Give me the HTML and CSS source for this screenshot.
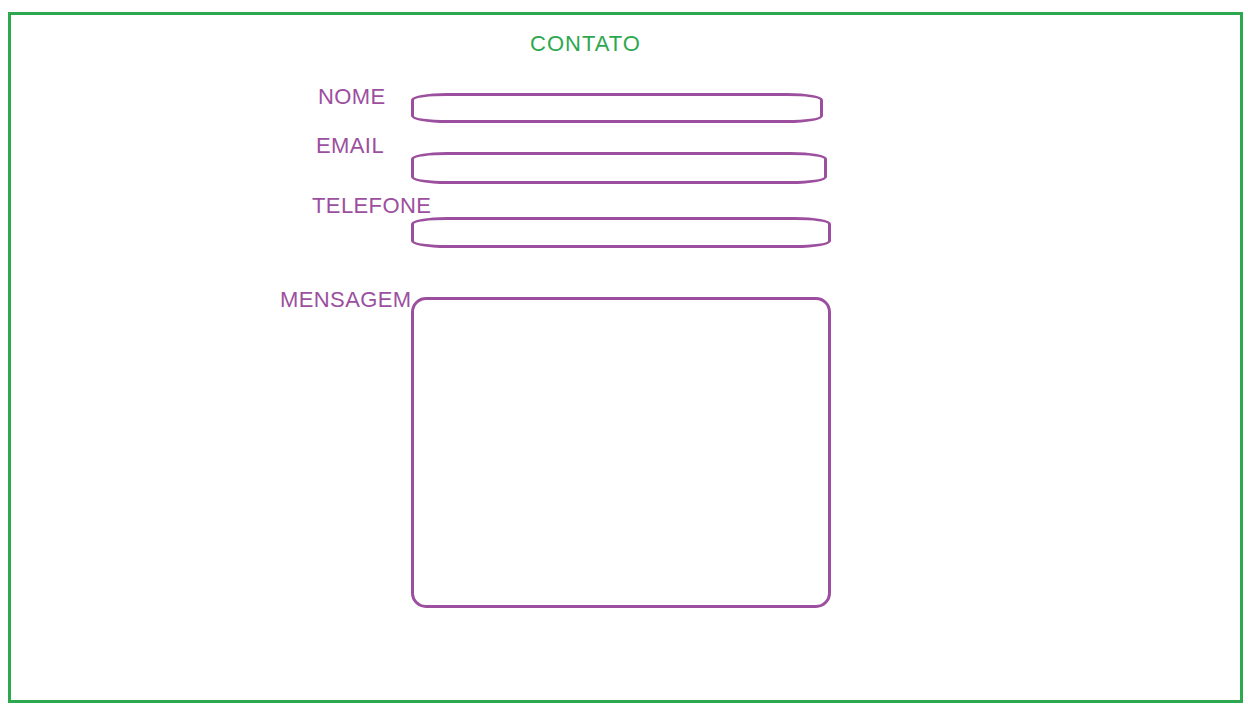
FILE: index.html
```html
<!DOCTYPE html>
<html lang="pt">
<head>
    <meta charset="UTF-8">
    <meta name="viewport" content="width=device-width, initial-scale=1.0">
    <title>Contato</title>
    <link rel="stylesheet" href="styles.css">
</head>
<body>
    <div class="frame">
        <h1 class="title">CONTATO</h1>
        <form class="contact-form">
            <div class="field field-nome">
                <label for="nome">NOME</label>
                <input type="text" id="nome">
            </div>
            <div class="field field-email">
                <label for="email">EMAIL</label>
                <input type="text" id="email">
            </div>
            <div class="field field-telefone">
                <label for="telefone">TELEFONE</label>
                <input type="text" id="telefone">
            </div>
            <div class="field field-mensagem">
                <label for="mensagem">MENSAGEM</label>
                <textarea id="mensagem"></textarea>
            </div>
        </form>
    </div>
</body>
</html>
```

FILE: styles.css
```css
body {
    margin: 0;
    padding: 0;
    background: #fff;
    font-family: "Liberation Sans", Arial, sans-serif;
}
.frame {
    box-sizing: border-box;
    width: 1235px;
    height: 691px;
    margin: 12px 0 0 8px;
    border: 3px solid #2ea84f;
    padding-top: 16px;
}
.title {
    margin: 0 0 0 519px;
    font-size: 22px;
    font-weight: normal;
    line-height: 25px;
    letter-spacing: 1px;
    color: #2ea84f;
}
.contact-form {
    display: flex;
    flex-direction: column;
}
.field {
    display: flex;
    align-items: flex-start;
}
.field label {
    flex: 0 0 auto;
    font-size: 22px;
    line-height: 25px;
    letter-spacing: 0.4px;
    color: #9c4f9f;
    white-space: nowrap;
}
.field input,
.field textarea {
    box-sizing: border-box;
    margin: 0;
    padding: 0 12px;
    border: 3px solid #9c4f9f;
    background: transparent;
    font: 16px "Liberation Sans", Arial, sans-serif;
    outline: none;
}
.field input {
    border-radius: 36px / 7px;
}
.field textarea {
    width: 420px;
    height: 311px;
    border-radius: 15px;
    resize: none;
}

.field-nome { margin-top: 28px; }
.field-nome label { margin-left: 307px; width: 93px; }
.field-nome input { margin-top: 9px; width: 412px; height: 30px; }

.field-email { margin-top: 10px; }
.field-email label { margin-left: 305px; width: 95px; }
.field-email input { margin-top: 19px; width: 416px; height: 32px; }

.field-telefone { margin-top: 9px; }
.field-telefone label { margin-left: 301px; width: 99px; }
.field-telefone input { margin-top: 24px; width: 420px; height: 31px; }

.field-mensagem { margin-top: 39px; }
.field-mensagem label { margin-left: 269px; width: 131px; }
.field-mensagem textarea { margin-top: 10px; }
```
